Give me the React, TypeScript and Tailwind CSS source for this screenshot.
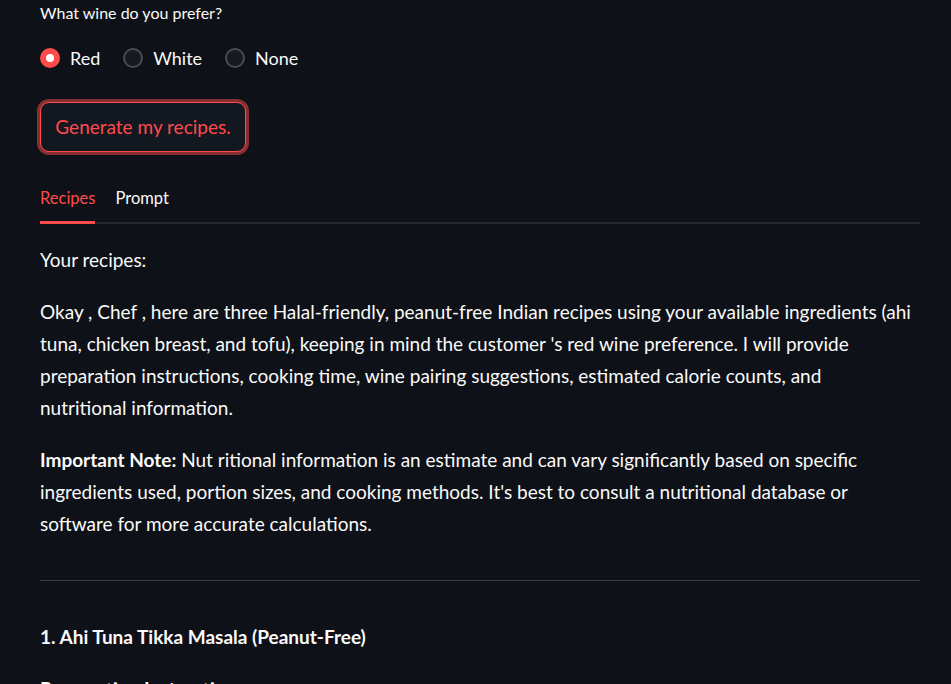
import React, { useState } from 'react';

const font = { fontFamily: 'Lato, "Noto Sans", sans-serif' };

const options = ['Red', 'White', 'None'];

const Radio: React.FC<{ label: string; checked: boolean; onSelect: () => void }> = ({ label, checked, onSelect }) => (
  <button type="button" onClick={onSelect} className="flex items-center gap-[10px]">
    {checked ? (
      <span className="flex h-5 w-5 items-center justify-center rounded-full bg-[#ff4b4b]">
        <span className="h-2 w-2 rounded-full bg-[#ffffff]" />
      </span>
    ) : (
      <span className="h-5 w-5 rounded-full border-2 border-[#4a4c55] bg-[#161922]" />
    )}
    <span className="text-[18px] leading-[24px] text-[#fafafa]">{label}</span>
  </button>
);

export default function App() {
  const [wine, setWine] = useState('Red');
  const [tab, setTab] = useState('Recipes');

  return (
    <div className="min-h-screen w-full bg-[#0e1117] text-[#fafafa]" style={font}>
      <div className="w-[880px] pl-[40px] box-content">
        <div className="pt-[2px] text-[16px] leading-[22px]">What wine do you prefer?</div>

        <div className="mt-[22px] flex items-center gap-[23px] h-[24px]">
          {options.map((o) => (
            <Radio key={o} label={o} checked={wine === o} onSelect={() => setWine(o)} />
          ))}
        </div>

        <div className="mt-[32px]">
          <button
            type="button"
            className="h-[50px] w-[206px] rounded-[9px] border border-[#ff4b4b] bg-[#131720] text-[19px] text-[#ff4b4b] shadow-[0_0_0_3px_rgba(255,75,75,0.5)]"
          >
            Generate my recipes.
          </button>
        </div>

        <div className="mt-[30px]">
          <div className="flex gap-[20px] border-b-2 border-[#262730]">
            {['Recipes', 'Prompt'].map((t) => (
              <button
                key={t}
                type="button"
                onClick={() => setTab(t)}
                className={
                  'relative -mb-[2px] pb-[12px] pt-[5px] text-[16.5px] leading-[22px] ' +
                  (tab === t ? 'text-[#ff4b4b] border-b-[3px] border-[#ff4b4b]' : 'text-[#fafafa] border-b-[3px] border-transparent')
                }
              >
                {t}
              </button>
            ))}
          </div>
        </div>

        <div className="pt-[20px] text-[19px] leading-[32px] whitespace-nowrap">
          <p className="mb-[20px]">Your recipes:</p>
          <p className="mb-[20px]">
            Okay , Chef , here are three Halal-friendly, peanut-free Indian recipes using your available ingredients (ahi
            <br />
            tuna, chicken breast, and tofu), keeping in mind the customer 's red wine preference. I will provide
            <br />
            preparation instructions, cooking time, wine pairing suggestions, estimated calorie counts, and
            <br />
            nutritional information.
          </p>
          <p className="mb-[20px]">
            <strong className="font-bold">Important Note:</strong> Nut ritional information is an estimate and can vary significantly based on specific
            <br />
            ingredients used, portion sizes, and cooking methods. It's best to consult a nutritional database or
            <br />
            software for more accurate calculations.
          </p>
          <hr className="mt-[40px] mb-[40px] border-t border-[#3a3c44]" />
          <p className="mb-[20px] font-bold">1. Ahi Tuna Tikka Masala (Peanut-Free)</p>
          <p className="mb-[20px] font-bold">Preparation Instructions:</p>
        </div>
      </div>
    </div>
  );
}
